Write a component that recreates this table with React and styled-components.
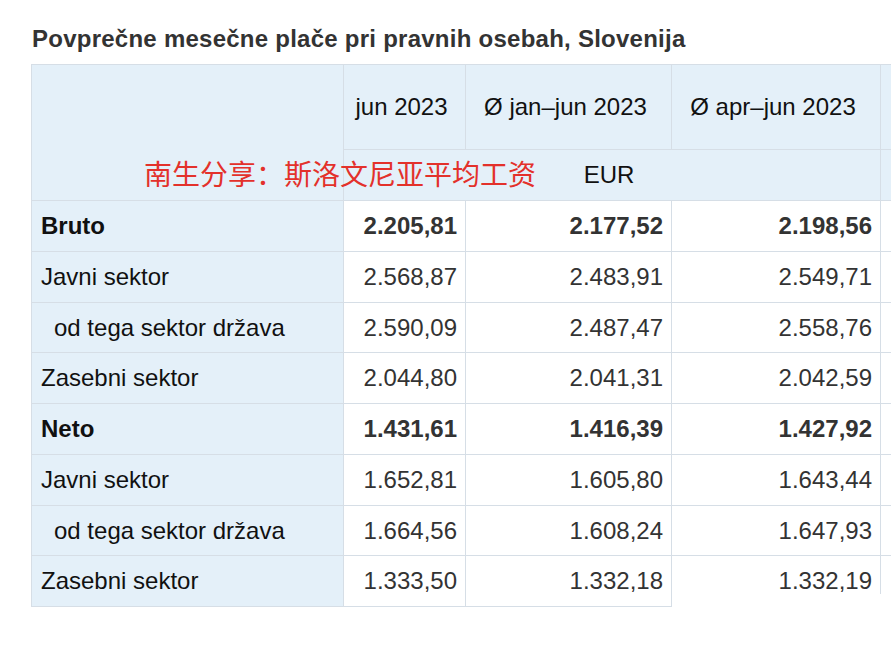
import React from 'react';
import styled, { createGlobalStyle } from 'styled-components';

const GlobalStyle = createGlobalStyle`
  html, body {
    margin: 0;
    padding: 0;
    background: #fff;
    overflow: hidden;
  }
  body {
    font-family: "Liberation Sans", Arial, sans-serif;
    color: #333;
  }
`;

const Page = styled.div`
  width: 891px;
  height: 648px;
  padding: 24px 0 0 31px;
  box-sizing: border-box;
  overflow: hidden;
`;

const Title = styled.h2`
  margin: 0 0 10px 1px;
  font-size: 24px;
  line-height: 30px;
  letter-spacing: 0.25px;
  font-weight: bold;
  color: #333;
  white-space: nowrap;
`;

const TableWrap = styled.div`
  position: relative;
  width: 1000px;
`;

const Table = styled.table`
  border-collapse: collapse;
  table-layout: fixed;
  width: 969px;
  font-size: 24px;
`;

const Cell = styled.td`
  border: 1px solid #d6dee6;
  padding: 0 8px 0 9px;
  background: ${p => (p.$head ? '#e4f0f9' : '#fff')};
  color: ${p => (p.$head ? '#111' : '#333')};
  font-weight: ${p => (p.$bold ? 'bold' : 'normal')};
  text-align: ${p => p.$align || 'left'};
  white-space: nowrap;
  box-sizing: border-box;
`;

const HeadCell = styled.th`
  border: 1px solid #d6dee6;
  background: #e4f0f9;
  font-weight: normal;
  color: #111;
  text-align: center;
  padding: 0 6px 0 0;
  white-space: nowrap;
`;

const Label = styled.span`
  padding-left: ${p => (p.$indent ? '13px' : '0')};
`;

const Row = styled.tr`
  height: ${p => p.$h}px;
`;

const Note = styled.div`
  position: absolute;
  left: 113px;
  top: 93px;
  font-family: "Noto Sans CJK SC", "Noto Sans", sans-serif;
  font-size: 28px;
  line-height: 32px;
  color: #e3312b;
  white-space: nowrap;
  pointer-events: none;
`;

const Fade = styled.div`
  position: absolute;
  left: 641px;
  top: 530px;
  width: 300px;
  height: 80px;
  background: #fff;
`;

const rows = [
  { label: 'Bruto', bold: true, v: ['2.205,81', '2.177,52', '2.198,56'] },
  { label: 'Javni sektor', v: ['2.568,87', '2.483,91', '2.549,71'] },
  { label: 'od tega sektor država', indent: true, v: ['2.590,09', '2.487,47', '2.558,76'] },
  { label: 'Zasebni sektor', v: ['2.044,80', '2.041,31', '2.042,59'] },
  { label: 'Neto', bold: true, v: ['1.431,61', '1.416,39', '1.427,92'] },
  { label: 'Javni sektor', v: ['1.652,81', '1.605,80', '1.643,44'] },
  { label: 'od tega sektor država', indent: true, v: ['1.664,56', '1.608,24', '1.647,93'] },
  { label: 'Zasebni sektor', v: ['1.333,50', '1.332,18', '1.332,19'] },
];

const heights = [51, 51, 50, 51, 51, 51, 50, 51];

export default function App() {
  return (
    <Page>
      <GlobalStyle />
      <Title>Povprečne mesečne plače pri pravnih osebah, Slovenija</Title>
      <TableWrap>
        <Table>
          <colgroup>
            <col style={{ width: 312 }} />
            <col style={{ width: 122 }} />
            <col style={{ width: 206 }} />
            <col style={{ width: 209 }} />
            <col style={{ width: 120 }} />
          </colgroup>
          <thead>
            <Row $h={85}>
              <HeadCell rowSpan={2} />
              <HeadCell>jun 2023</HeadCell>
              <HeadCell>Ø jan–jun 2023</HeadCell>
              <HeadCell>Ø apr–jun 2023</HeadCell>
              <HeadCell />
            </Row>
            <Row $h={51}>
              <HeadCell colSpan={3}>EUR</HeadCell>
              <HeadCell />
            </Row>
          </thead>
          <tbody>
            {rows.map((r, i) => (
              <Row key={i} $h={heights[i]}>
                <Cell $head $bold={r.bold}>
                  <Label $indent={r.indent}>{r.label}</Label>
                </Cell>
                {r.v.map((n, j) => (
                  <Cell key={j} $bold={r.bold} $align="right">
                    {n}
                  </Cell>
                ))}
                <Cell />
              </Row>
            ))}
          </tbody>
        </Table>
        <Note>南生分享：斯洛文尼亚平均工资</Note>
        <Fade />
      </TableWrap>
    </Page>
  );
}
